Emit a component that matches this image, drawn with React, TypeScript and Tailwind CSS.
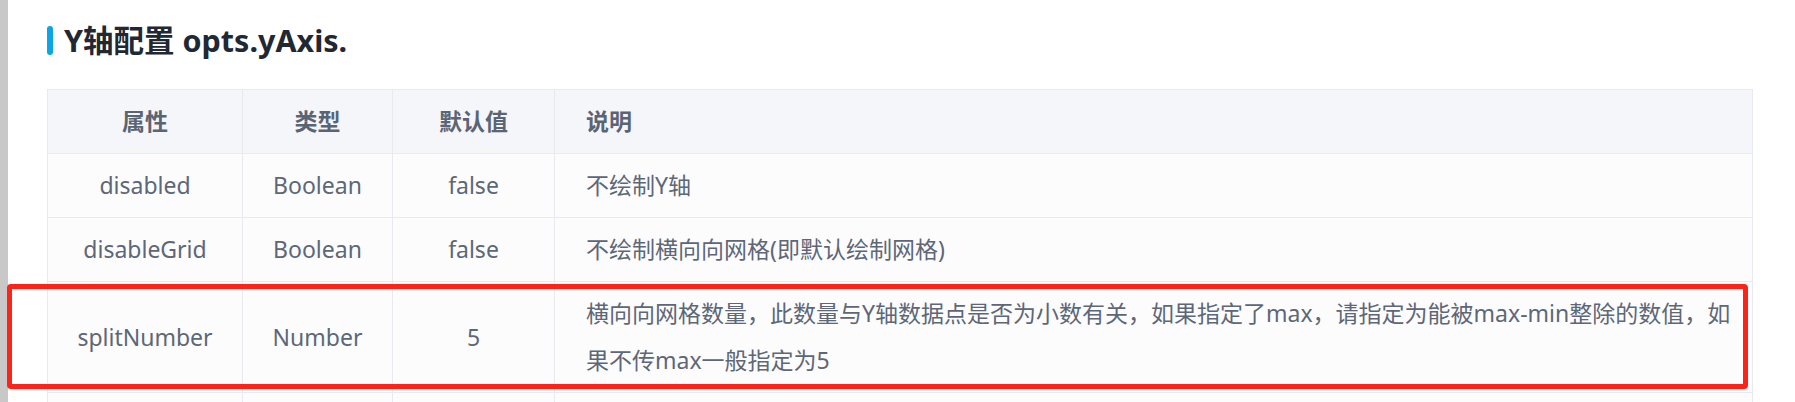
import React from 'react';

type Row = {
  name: string;
  type: string;
  def: string;
  desc: string;
};

const rows: Row[] = [
  { name: 'disabled', type: 'Boolean', def: 'false', desc: '不绘制Y轴' },
  { name: 'disableGrid', type: 'Boolean', def: 'false', desc: '不绘制横向向网格(即默认绘制网格)' },
  {
    name: 'splitNumber',
    type: 'Number',
    def: '5',
    desc: '横向向网格数量，此数量与Y轴数据点是否为小数有关，如果指定了max，请指定为能被max-min整除的数值，如果不传max一般指定为5',
  },
];

const cell = 'border border-[#e8eaef] py-[8px] leading-[47px] align-middle';

export default function App() {
  return (
    <div className="relative flex h-[402px] w-[1795px] overflow-hidden bg-white font-['Noto_Sans','Noto_Sans_CJK_SC',sans-serif]">
      {/* left scrollbar strip */}
      <div className="w-[8px] shrink-0 bg-[#c8c8c8]" />

      <div className="flex-1 pl-[39px] pt-[26px]">
        {/* section title */}
        <div className="flex h-[29px] items-center gap-[11px]">
          <div className="h-[29px] w-[6px] rounded-full bg-[#0ea5e6]" />
          <h2 className="text-[30.5px] font-bold leading-none text-[#1f2833]">Y轴配置 opts.yAxis.</h2>
        </div>

        {/* options table */}
        <table className="mt-[34px] w-[1706px] table-fixed border-collapse text-[23px] text-[#5d6777]">
          <colgroup>
            <col className="w-[195px]" />
            <col className="w-[150px]" />
            <col className="w-[162px]" />
            <col />
          </colgroup>
          <thead>
            <tr className="bg-[#f5f6f9] font-bold text-[#5a6475]">
              <th className={`${cell} text-center`}>属性</th>
              <th className={`${cell} text-center`}>类型</th>
              <th className={`${cell} text-center`}>默认值</th>
              <th className={`${cell} pl-[31px] text-left`}>说明</th>
            </tr>
          </thead>
          <tbody>
            {rows.map((r) => (
              <tr key={r.name} className="bg-[#fcfcfd]">
                <td className={`${cell} text-center`}>{r.name}</td>
                <td className={`${cell} text-center`}>{r.type}</td>
                <td className={`${cell} text-center`}>{r.def}</td>
                <td className={`${cell} pl-[31px] pr-[6px] text-left`}>{r.desc}</td>
              </tr>
            ))}
            <tr className="bg-[#fcfcfd]">
              <td className={cell}>&nbsp;</td>
              <td className={cell}>&nbsp;</td>
              <td className={cell}>&nbsp;</td>
              <td className={cell}>&nbsp;</td>
            </tr>
          </tbody>
        </table>
      </div>

      {/* red highlight annotation */}
      <div className="pointer-events-none absolute left-[7px] top-[284px] h-[105px] w-[1741px] rounded-[4px] border-[5px] border-[#fe2318]" />
    </div>
  );
}
